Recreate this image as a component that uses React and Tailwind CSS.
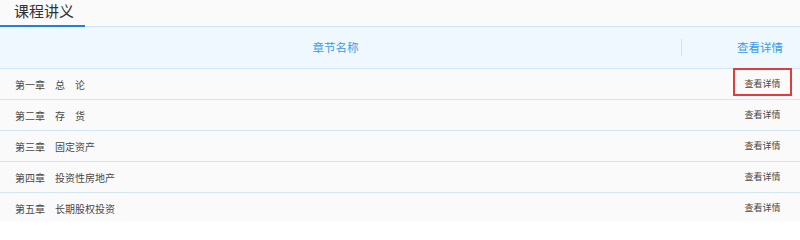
import React from "react";

const chapters = [
  "第一章　总　论",
  "第二章　存　货",
  "第三章　固定资产",
  "第四章　投资性房地产",
  "第五章　长期股权投资",
];

export default function App() {
  return (
    <div
      className="w-[800px] h-[221px] overflow-hidden bg-[#fafafa]"
      style={{ fontFamily: '"Noto Sans CJK SC", "Noto Sans", sans-serif' }}
    >
      <div className="h-[25px] flex items-center pb-[4px] px-[14px] text-[15px] text-[#333] leading-none">
        课程讲义
      </div>
      <div className="flex h-[2px]">
        <div className="w-[85px] bg-[#1e7fdf]" />
        <div className="flex-1 mt-px h-px bg-[#d3e6f6]" />
      </div>

      <div className="flex h-[42px] items-center bg-[#eef8fe] border-b border-[#d3e6f6] text-[11.5px] text-[#3d9ae6]">
        <div className="flex-1 text-center pr-[10px]">章节名称</div>
        <div className="w-[119px] flex items-center h-full">
          <div className="w-px h-[17px] bg-[#d3e3f0]" />
          <div className="flex-1 text-right pr-[17px]">查看详情</div>
        </div>
      </div>

      {chapters.map((c, i) => (
        <div
          key={c}
          className="flex items-center h-[31px] border-b border-[#d3e6f6]"
        >
          <div className="flex-1 pl-[15px] text-[10px] text-[#484848]">{c}</div>
          <button
            className={
              "mr-[8px] w-[59px] h-[28px] flex items-center justify-center text-[9px] text-[#484848] border-2 " +
              (i === 0 ? "border-[#e23b3b] -mt-[4px] pt-[4px]" : "border-transparent")
            }
          >
            查看详情
          </button>
        </div>
      ))}
    </div>
  );
}
